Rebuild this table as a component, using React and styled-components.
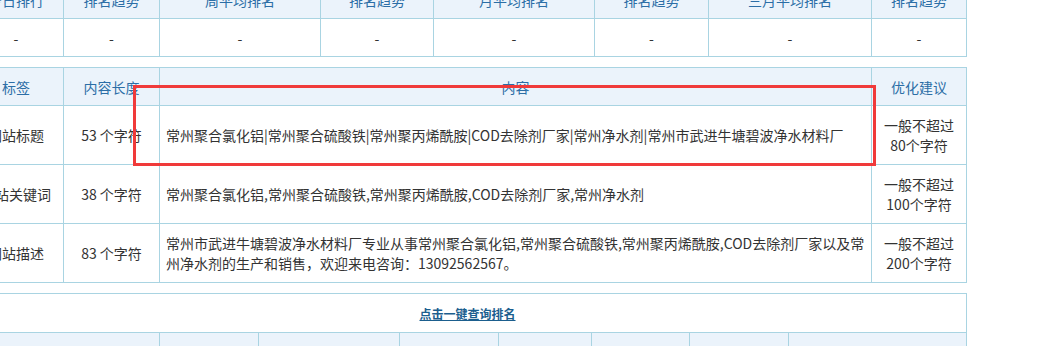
import styled, { createGlobalStyle } from 'styled-components';

const GlobalStyle = createGlobalStyle`
  body {
    margin: 0;
    background: #fff;
    overflow: hidden;
    font-family: "Noto Sans CJK SC", "Noto Sans", sans-serif;
  }
`;

// 页面主体，表格区域整体左移上移
const Page = styled.div`
  position: relative;
  width: 998px;
  margin: -20px 0 0 -32px;
  display: flex;
  flex-direction: column;
  gap: 10px;
`;

const Table = styled.table`
  width: 998px;
  table-layout: fixed;
  border-collapse: collapse;
  font-size: 14px;
  color: #333;
`;

const Th = styled.th`
  height: 37px;
  padding: 0;
  border: 1px solid #a9d4e2;
  background: #ebf3fb;
  color: #2c6ea6;
  font-weight: normal;
  text-align: center;
`;

const Td = styled.td`
  height: ${(p) => p.$h || 37}px;
  padding: ${(p) => (p.$left ? '0 1px 0 6px' : '0 4px')};
  border: 1px solid #a9d4e2;
  line-height: 20px;
  text-align: ${(p) => (p.$left ? 'left' : 'center')};
  vertical-align: middle;
`;

const LinkCell = styled.td`
  height: 38px;
  padding: 0;
  border: 1px solid #a9d4e2;
  text-align: center;
`;

const QueryLink = styled.a`
  font-size: 12px;
  font-weight: bold;
  color: #1b5e8e;
  text-decoration: underline;
  cursor: pointer;
`;

// 标题区域的红色标注框
const Marker = styled.div`
  position: absolute;
  left: 165px;
  top: 105px;
  width: 737px;
  height: 75px;
  border: 3px solid #f03a3a;
  pointer-events: none;
`;

const rankHeaders = ['今日排行', '排名趋势', '周平均排名', '排名趋势', '月平均排名', '排名趋势', '三月平均排名', '排名趋势'];
const rankWidths = [95, 96, 161, 113, 161, 114, 163, 95];

const seoRows = [
  {
    label: '网站标题',
    len: '53 个字符',
    content: '常州聚合氯化铝|常州聚合硫酸铁|常州聚丙烯酰胺|COD去除剂厂家|常州净水剂|常州市武进牛塘碧波净水材料厂',
    tip: ['一般不超过', '80个字符'],
  },
  {
    label: '网站关键词',
    len: '38 个字符',
    content: '常州聚合氯化铝,常州聚合硫酸铁,常州聚丙烯酰胺,COD去除剂厂家,常州净水剂',
    tip: ['一般不超过', '100个字符'],
  },
  {
    label: '网站描述',
    len: '83 个字符',
    content: '常州市武进牛塘碧波净水材料厂专业从事常州聚合氯化铝,常州聚合硫酸铁,常州聚丙烯酰胺,COD去除剂厂家以及常州净水剂的生产和销售，欢迎来电咨询：13092562567。',
    tip: ['一般不超过', '200个字符'],
  },
];

const engineHeaders = ['关键词', '百度PC', '百度移动', '360', '搜狗', '神马', '头条', '指数'];
const engineWidths = [191, 99, 141, 99, 93, 98, 99, 178];

function Colgroup({ widths }) {
  return (
    <colgroup>
      {widths.map((w, i) => (
        <col key={i} style={{ width: w }} />
      ))}
    </colgroup>
  );
}

export default function App() {
  return (
    <>
      <GlobalStyle />
      <Page>
        {/* 排名概况 */}
        <Table>
          <Colgroup widths={rankWidths} />
          <thead>
            <tr>
              {rankHeaders.map((h, i) => (
                <Th key={i}>{h}</Th>
              ))}
            </tr>
          </thead>
          <tbody>
            <tr>
              {rankHeaders.map((_, i) => (
                <Td key={i}>-</Td>
              ))}
            </tr>
          </tbody>
        </Table>

        {/* TDK 信息 */}
        <Table>
          <Colgroup widths={[95, 96, 712, 95]} />
          <thead>
            <tr>
              <Th>标签</Th>
              <Th>内容长度</Th>
              <Th>内容</Th>
              <Th>优化建议</Th>
            </tr>
          </thead>
          <tbody>
            {seoRows.map((row) => (
              <tr key={row.label}>
                <Td $h={58}>{row.label}</Td>
                <Td $h={58}>{row.len}</Td>
                <Td $h={58} $left>
                  {row.content}
                </Td>
                <Td $h={58}>
                  {row.tip[0]}
                  <br />
                  {row.tip[1]}
                </Td>
              </tr>
            ))}
          </tbody>
        </Table>

        {/* 关键词排名查询 */}
        <Table>
          <Colgroup widths={engineWidths} />
          <tbody>
            <tr>
              <LinkCell colSpan={8}>
                <QueryLink>点击一键查询排名</QueryLink>
              </LinkCell>
            </tr>
            <tr>
              {engineHeaders.map((h, i) => (
                <Th key={i}>{h}</Th>
              ))}
            </tr>
          </tbody>
        </Table>

        <Marker />
      </Page>
    </>
  );
}
